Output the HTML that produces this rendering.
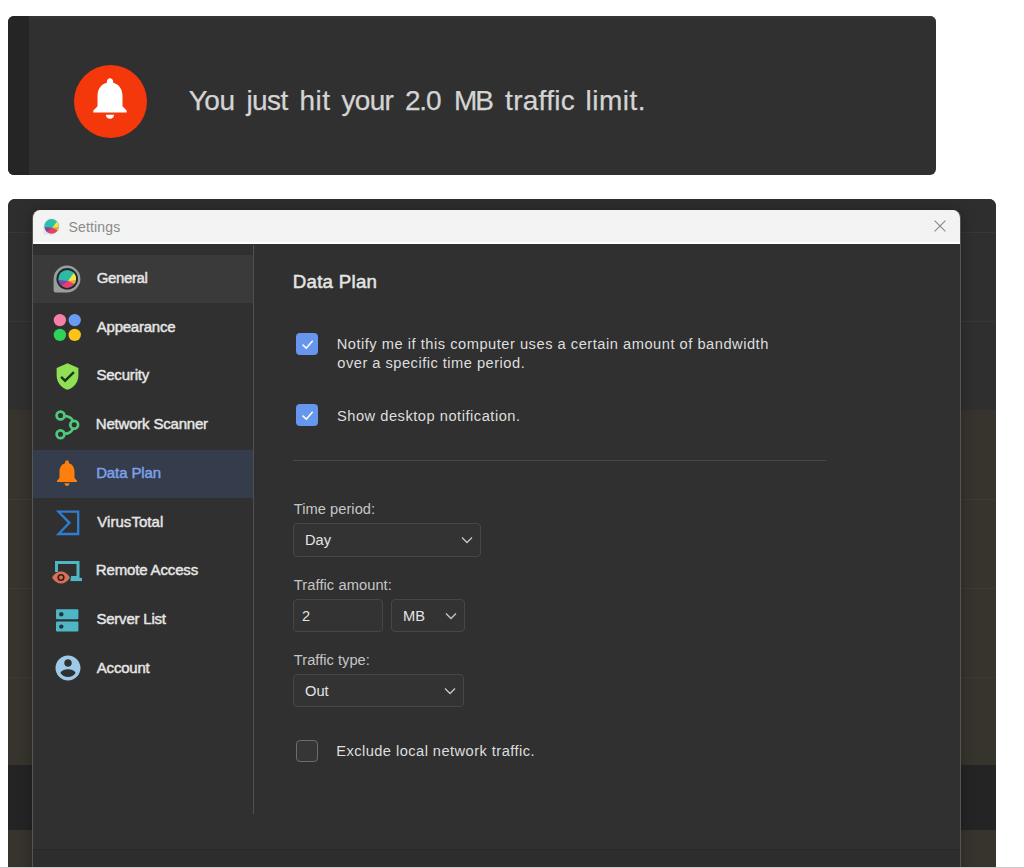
<!DOCTYPE html>
<html lang="en">
<head>
<meta charset="utf-8">
<title>Settings - Data Plan</title>
<style>
*{box-sizing:border-box;margin:0;padding:0}
html,body{width:1024px;height:868px;overflow:hidden;background:#fff}
body{position:relative;font-family:"Liberation Sans",sans-serif;color:#e4e4e4}
.abs{position:absolute}
/* toast */
#toast{left:8px;top:16px;width:928px;height:159px;background:#303030;border-radius:6px;overflow:hidden}
#toast .strip{left:0;top:0;width:21px;height:159px;background:#252525}
#toast .circle{left:66px;top:48.5px;width:73px;height:73px;border-radius:50%;background:#f5370c}
#toast .msg span{position:absolute;top:0}
#toast .msg{left:181px;top:70.300px;font-size:28px;line-height:30px;color:#d4d4d4;white-space:nowrap;-webkit-text-stroke:0.25px #d4d4d4}
/* backdrop window */
#back{left:8px;top:199px;width:988px;height:669px;background:#2e2e2e;border-radius:7px 7px 0 0;overflow:hidden}
#back .row{left:0;width:988px}
#bottomline{left:0;top:867px;width:1024px;height:1px;background:#c9c9c9}
/* dialog */
#dlg{left:32px;top:210px;width:929px;height:658px;background:#303030;border-radius:8px 8px 0 0;overflow:hidden;border:1px solid #555;border-bottom:none;border-top:none}
#title{left:0;top:0;width:927px;height:34.400px;background:#f3f3f3;border-bottom:2px solid #fdfdfd}
#title .t{left:35.500px;top:8px;font-size:14px;line-height:18px;color:#8a8a8a;letter-spacing:0.15px}
#side{left:0;top:35px;width:221px;height:568.500px;border-right:1px solid #505050}
.item{left:0;width:220px;height:48.75px}
.item span{position:absolute;left:63px;top:14.450px;font-size:15px;line-height:18px;font-weight:normal;-webkit-text-stroke:0.45px #e6e6e6;color:#e6e6e6;white-space:nowrap}
.item svg{position:absolute;left:19px;top:9.400px;width:30px;height:30px}
.item.hover{background:#3a3a3a}
.item.sel{background:#353c4c}
.item.sel span{color:#7fa2ea;-webkit-text-stroke-color:#7fa2ea}
h1{left:260px;top:61px;font-size:18.7px;line-height:22px;font-weight:normal;-webkit-text-stroke:0.5px #e4e4e4;color:#e4e4e4;white-space:nowrap}
.cb{width:22px;height:22px;border-radius:4px;background:#6696ee}
.cb.off{background:#363636;border:1.5px solid #6c6c6c}
.txt{font-size:14.67px;line-height:19px;color:#dedede;white-space:nowrap}
.lbl{font-size:14.67px;line-height:18px;color:#c6c6c6;white-space:nowrap}
.box{height:33px;border:1px solid #474747;border-radius:4px;background:#333333;font-size:14.67px;line-height:33px;color:#e4e4e4;padding-left:11px}
.box svg{position:absolute;right:7px;top:12px;width:12px;height:8px}
#hr{left:260px;top:250px;width:533px;height:1px;background:#484848}
#foot{left:0;top:639px;width:927px;height:20px;background:#2d2d2d;border-top:1px solid #292929}
/*FIT*/
#w0{letter-spacing:-0.548px;margin-left:-0.20px}
#w1{letter-spacing:-0.582px;margin-left:1.30px}
#w2{letter-spacing:0.592px;margin-left:-1.42px}
#w3{letter-spacing:-0.663px;margin-left:0.18px}
#w4{letter-spacing:-1.213px;margin-left:-0.93px}
#w5{letter-spacing:-1.985px;margin-left:-1.52px}
#w6{letter-spacing:0.278px;margin-left:0.11px}
#w7{letter-spacing:0.534px;margin-left:-1.43px}
#s0{letter-spacing:-0.366px;margin-left:0.74px}
#s1{letter-spacing:-0.250px;margin-left:0.84px}
#s2{letter-spacing:-0.182px;margin-left:0.40px}
#s3{letter-spacing:-0.201px;margin-left:-0.19px}
#s4{letter-spacing:-0.115px;margin-left:0.16px}
#s5{letter-spacing:0.048px;margin-left:1.25px}
#s6{letter-spacing:-0.153px;margin-left:-0.20px}
#s7{letter-spacing:-0.208px;margin-left:0.40px}
#s8{letter-spacing:-0.215px;margin-left:0.84px}
#t_h1{letter-spacing:0.276px;margin-left:-0.32px}
#t_n1{letter-spacing:0.515px;margin-left:-0.36px}
#t_n2{letter-spacing:0.484px;margin-left:0.32px}
#t_sh{letter-spacing:0.515px;margin-left:-0.05px}
#t_ex{letter-spacing:0.445px;margin-left:-0.82px}
#l_tp{letter-spacing:0.028px;margin-left:0.85px}
#l_ta{letter-spacing:0.076px;margin-left:0.85px}
#l_tt{letter-spacing:0.023px;margin-left:0.85px}
/*ENDFIT*/</style>
</head>
<body>

<div id="toast" class="abs">
  <div class="strip abs"></div>
  <div class="abs" style="left:21px;top:0;width:907px;height:5px;background:linear-gradient(#393735,#303030)"></div>
  <div class="circle abs"></div>
  <svg class="abs" style="left:77.300px;top:57.400px;width:50px;height:50px" viewBox="0 0 24 24"><path fill="#fff" d="M12 22c1.100 0 2-.9 2-2h-4c0 1.100.89 2 2 2zm6-6v-5c0-3.070-1.640-5.640-4.500-6.320V4c0-.83-.67-1.500-1.500-1.500s-1.500.67-1.500 1.500v.68C7.630 5.360 6 7.920 6 11v5l-2 2v1h16v-1l-2-2z"/></svg>
  <div id="t_msg" class="msg abs"><span id="w0" style="left:0.0px">You</span> <span id="w1" style="left:56.2px">just</span> <span id="w2" style="left:111.8px">hit</span> <span id="w3" style="left:152.3px">your</span> <span id="w4" style="left:216.9px">2.0</span> <span id="w5" style="left:266.5px">MB</span> <span id="w6" style="left:316.0px">traffic</span> <span id="w7" style="left:397.8px">limit.</span></div>
</div>

<div id="back" class="abs">
  <div class="row abs" style="top:0;height:33px;background:#2e2e2e"></div>
  <div class="row abs" style="top:33px;height:1px;background:#373737"></div>
  <div class="row abs" style="top:34px;height:88px;background:#2f2f2f"></div>
  <div class="row abs" style="top:122px;height:1px;background:#373737"></div>
  <div class="row abs" style="top:123px;height:88px;background:#2f2f2f"></div>
  <div class="row abs" style="top:211px;height:355px;background:#37332d"></div>
  <div class="row abs" style="top:300px;height:1px;background:#3d3933"></div>
  <div class="row abs" style="top:389px;height:1px;background:#3d3933"></div>
  <div class="row abs" style="top:478px;height:1px;background:#3d3933"></div>
  <div class="row abs" style="top:566px;height:65px;background:#242424"></div>
  <div class="row abs" style="top:631px;height:38px;background:#37332d"></div>
  <div class="abs" style="left:25px;top:11px;width:927px;height:670px;border-radius:8px;box-shadow:0 1px 16px rgba(0,0,0,0.30)"></div>
</div>

<div id="dlg" class="abs">
  <div id="title" class="abs">
    <svg class="abs" style="left:9px;top:6.700px;width:19px;height:19px" viewBox="0 0 19 19"><path d="M9.500 1.200A8.300 8.300 0 1 1 9.500 17.800H2.400A1.200 1.200 0 0 1 1.200 16.600V9.500A8.300 8.300 0 0 1 9.500 1.200Z" fill="#e6e4ea"/><circle cx="9.600" cy="9.300" r="7.200" fill="#2bbfad"/><path d="M10.200 10.800 L15 4.600 A7.200 7.200 0 0 1 16.700 10.400 Z" fill="#f7e440"/><path d="M10.200 10.800 L16.700 10.400 A7.200 7.200 0 0 1 15.500 13.500 Z" fill="#f7a03a"/><path d="M10.200 10.800 L15.500 13.500 A7.200 7.200 0 0 1 5 14.900 L8 11.800 Z" fill="#ee3d63"/><path d="M10.200 10.800 L5 14.900 A7.200 7.200 0 0 1 2.500 10 Z" fill="#8d3fa3"/></svg>
    <div id="t_set" class="t abs">Settings</div>
    <svg class="abs" style="left:899.700px;top:9.200px;width:14px;height:14px" viewBox="0 0 14 14"><path d="M1 1L13 13M13 1L1 13" stroke="#8a8a8a" stroke-width="1.300" fill="none" transform="translate(0.700 0.700) scale(0.900)"/></svg>
  </div>

  <div id="side" class="abs">
    <div class="item abs hover" style="top:9.50px"><svg viewBox="0 0 30 30"><path d="M15 1.600A13.400 13.400 0 1 1 15 28.400H3.600A2 2 0 0 1 1.600 26.400V15A13.400 13.400 0 0 1 15 1.600Z" fill="#9a9da0"/><circle cx="15.200" cy="14.800" r="10.800" fill="#20262a"/><circle cx="15.200" cy="14.800" r="8.900" fill="#2db9a4"/><path d="M16 17 L21.800 8.900 A8.900 8.900 0 0 1 23.900 16.500 Z" fill="#f8e63e"/><path d="M16 17 L23.900 16.500 A8.900 8.900 0 0 1 22.400 20.100 Z" fill="#f6a53a"/><path d="M16 17 L22.400 20.100 A8.900 8.900 0 0 1 9.800 21.800 L13 18 Z" fill="#f03c6c"/><path d="M16 17 L9.800 21.800 A8.900 8.900 0 0 1 6.400 16 Z" fill="#8c3fa6"/></svg><span id="s0">General</span></div>
    <div class="item abs" style="top:58.25px"><svg viewBox="0 0 30 30"><circle cx="7.900" cy="7.100" r="6.200" fill="#f57fa5"/><circle cx="22.700" cy="7.100" r="6.200" fill="#699bf0"/><circle cx="7.900" cy="21.900" r="6.200" fill="#2fd259"/><circle cx="22.700" cy="21.900" r="6.200" fill="#fcc318"/></svg><span id="s1">Appearance</span></div>
    <div class="item abs" style="top:107.00px"><svg viewBox="0 0 24 24" style="left:19.600px;top:10.200px;width:29px;height:29px"><path d="M12 1L3 5v6c0 5.550 3.840 10.740 9 12 5.160-1.260 9-6.450 9-12V5l-9-4z" fill="#8fe054"/><path d="M10 17l-4-4 1.410-1.410L10 14.170l6.590-6.590L18 9l-8 8z" fill="#1d3517"/></svg><span id="s2">Security</span></div>
    <div class="item abs" style="top:155.75px"><svg viewBox="0 0 30 30"><g fill="none" stroke="#4fca7c" stroke-width="2.700"><circle cx="8.500" cy="5.500" r="3.900"/><circle cx="22.200" cy="14.800" r="3.900"/><circle cx="8.500" cy="24.200" r="3.900"/><path d="M12.400 5.800C17 6.200 20 8.200 20.800 11"/><path d="M12.400 23.900C17 23.500 20 21.500 20.800 18.600"/></g></svg><span id="s3">Network Scanner</span></div>
    <div class="item abs sel" style="top:204.50px"><svg viewBox="0 0 24 24" preserveAspectRatio="none" style="top:7.600px;height:31.600px"><path d="M12 22c1.100 0 2-.9 2-2h-4c0 1.100.89 2 2 2zm6-6v-5c0-3.070-1.640-5.640-4.500-6.320V4c0-.83-.67-1.500-1.500-1.500s-1.500.67-1.500 1.500v.68C7.630 5.360 6 7.920 6 11v5l-2 2v1h16v-1l-2-2z" fill="#ff7f0e"/></svg><span id="s4">Data Plan</span></div>
    <div class="item abs" style="top:253.25px"><svg viewBox="0 0 30 30"><path d="M6.500 3.700H26.200V26H6.500L17.400 14.850Z" fill="none" stroke="#2e7fd2" stroke-width="2.300" stroke-linejoin="miter"/></svg><span id="s5">VirusTotal</span></div>
    <div class="item abs" style="top:302.00px"><svg viewBox="0 0 30 30" style="top:10.500px"><path d="M4.500 14V4.500H26V19.500H19" fill="none" stroke="#4db7c5" stroke-width="3"/><path d="M18.500 21.500H30" fill="none" stroke="#4db7c5" stroke-width="3.200"/><path d="M0 19.500C2.500 15.300 5.800 13.500 9 13.500S15.500 15.300 18 19.500C15.500 23.700 12.200 25.500 9 25.500S2.500 23.700 0 19.500Z" fill="#d6705b"/><circle cx="9" cy="19.500" r="3.600" fill="#3a1d18"/><circle cx="9" cy="19.500" r="1.900" fill="#d6705b"/></svg><span id="s6">Remote Access</span></div>
    <div class="item abs" style="top:350.75px"><svg viewBox="0 0 30 30" style="top:10px"><rect x="4" y="3.300" width="22.400" height="10" rx="1" fill="#4db7c5"/><rect x="4" y="15.600" width="22.400" height="10" rx="1" fill="#4db7c5"/><circle cx="9.300" cy="8.300" r="2.200" fill="#22363c"/><circle cx="9.300" cy="20.600" r="2.200" fill="#22363c"/></svg><span id="s7">Server List</span></div>
    <div class="item abs" style="top:399.50px"><svg viewBox="0 0 24 24" style="left:19.600px;top:8.900px"><path d="M12 2C6.480 2 2 6.480 2 12s4.480 10 10 10 10-4.480 10-10S17.520 2 12 2zm0 3c1.660 0 3 1.340 3 3s-1.340 3-3 3-3-1.340-3-3 1.340-3 3-3zm0 14.200c-2.500 0-4.710-1.280-6-3.220.03-1.990 4-3.080 6-3.080 1.990 0 5.970 1.090 6 3.080-1.290 1.940-3.500 3.220-6 3.220z" fill="#9fc9e9"/></svg><span id="s8">Account</span></div>
  </div>

  <h1 id="t_h1" class="abs">Data Plan</h1>

  <div class="cb abs" style="left:263px;top:123px"><svg viewBox="0 0 22 22" style="position:absolute;left:0;top:0;width:22px;height:22px"><path d="M6.600 11.600L10.300 15.200L16.700 7.800" fill="none" stroke="#fff" stroke-width="1.500"/></svg></div>
  <div id="t_n1" class="txt abs" style="left:304px;top:125px">Notify me if this computer uses a certain amount of bandwidth</div>
  <div id="t_n2" class="txt abs" style="left:304px;top:144px">over a specific time period.</div>
  <div class="cb abs" style="left:263px;top:194px"><svg viewBox="0 0 22 22" style="position:absolute;left:0;top:0;width:22px;height:22px"><path d="M6.600 11.600L10.300 15.200L16.700 7.800" fill="none" stroke="#fff" stroke-width="1.500"/></svg></div>
  <div id="t_sh" class="txt abs" style="left:304px;top:197px">Show desktop notification.</div>

  <div id="hr" class="abs"></div>

  <div id="l_tp" class="lbl abs" style="left:260px;top:290px">Time period:</div>
  <div class="box abs" style="left:260px;top:313px;width:188px;height:33.500px">Day<svg viewBox="0 0 12 8"><path d="M1 1.500L6 6.500L11 1.500" stroke="#c8c8c8" stroke-width="1.300" fill="none"/></svg></div>

  <div id="l_ta" class="lbl abs" style="left:260px;top:366px">Traffic amount:</div>
  <div class="box abs" style="left:260px;top:388.700px;width:90px;padding-left:8px">2</div>
  <div class="box abs" style="left:358px;top:388.700px;width:74px">MB<svg viewBox="0 0 12 8"><path d="M1 1.500L6 6.500L11 1.500" stroke="#c8c8c8" stroke-width="1.300" fill="none"/></svg></div>

  <div id="l_tt" class="lbl abs" style="left:260px;top:441px">Traffic type:</div>
  <div class="box abs" style="left:260px;top:464.300px;width:171px">Out<svg viewBox="0 0 12 8"><path d="M1 1.500L6 6.500L11 1.500" stroke="#c8c8c8" stroke-width="1.300" fill="none"/></svg></div>

  <div class="cb off abs" style="left:263px;top:530px"></div>
  <div id="t_ex" class="txt abs" style="left:304px;top:532px">Exclude local network traffic.</div>

  <div id="foot" class="abs"></div>
</div>

<div id="bottomline" class="abs"></div>
</body>
</html>
